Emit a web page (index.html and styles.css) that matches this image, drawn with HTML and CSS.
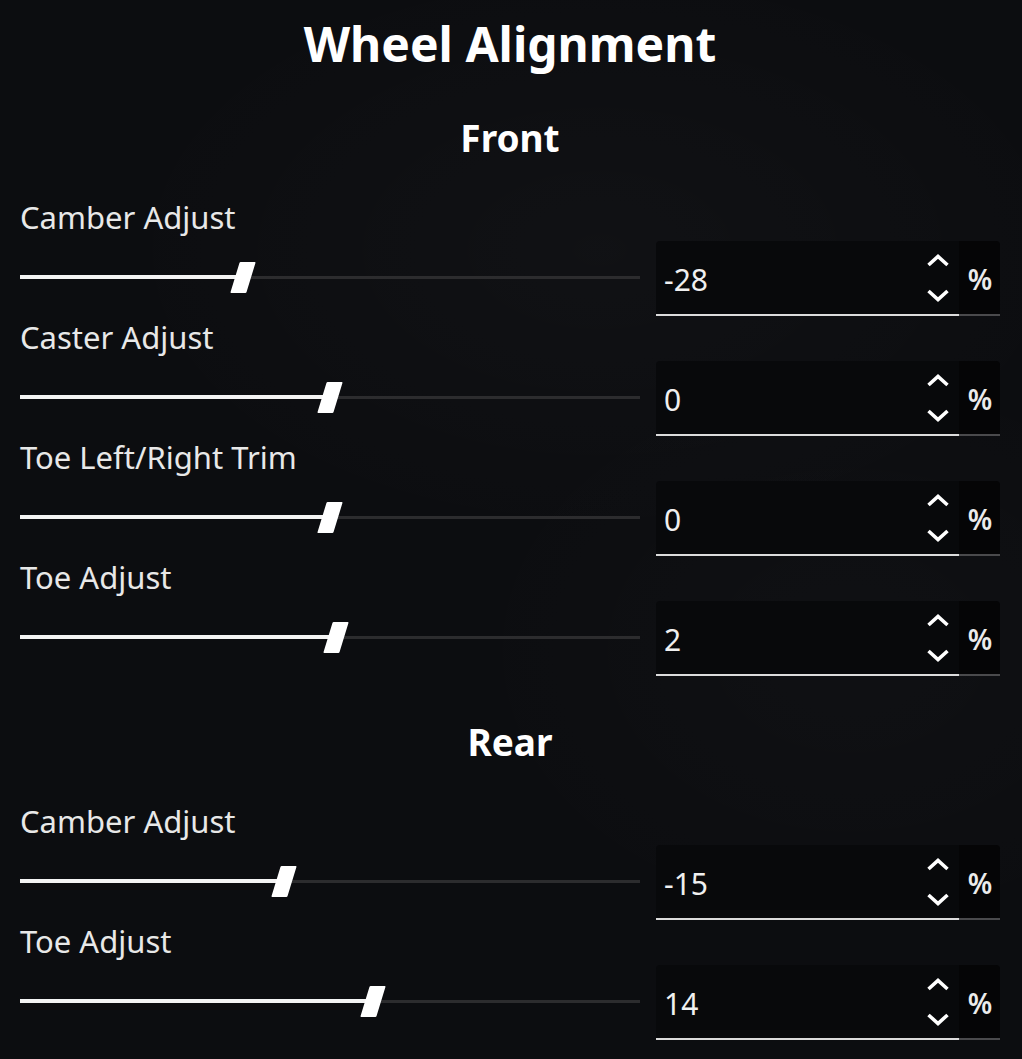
FILE: index.html
```html
<!DOCTYPE html>
<html lang="en">
<head>
<meta charset="utf-8">
<title>Wheel Alignment</title>
<link rel="stylesheet" href="styles.css">
</head>
<body>
<main class="panel">
  <h1 class="title">Wheel Alignment</h1>

  <section class="group">
    <h2 class="group-title">Front</h2>

    <div class="row">
      <div class="label">Camber Adjust</div>
      <div class="control">
        <div class="slider" style="--p:36%"><div class="fill"></div><div class="thumb"></div></div>
        <div class="field">
          <div class="field-main"><span class="value">-28</span>
            <span class="spin"><svg viewBox="0 0 24 13"><polyline points="2.5,11 12,2.5 21.5,11"/></svg><svg viewBox="0 0 24 13"><polyline points="2.5,2 12,10.5 21.5,2"/></svg></span>
          </div>
          <div class="suffix">%</div>
        </div>
      </div>
    </div>

    <div class="row">
      <div class="label">Caster Adjust</div>
      <div class="control">
        <div class="slider" style="--p:50%"><div class="fill"></div><div class="thumb"></div></div>
        <div class="field">
          <div class="field-main"><span class="value">0</span>
            <span class="spin"><svg viewBox="0 0 24 13"><polyline points="2.5,11 12,2.5 21.5,11"/></svg><svg viewBox="0 0 24 13"><polyline points="2.5,2 12,10.5 21.5,2"/></svg></span>
          </div>
          <div class="suffix">%</div>
        </div>
      </div>
    </div>

    <div class="row">
      <div class="label">Toe Left/Right Trim</div>
      <div class="control">
        <div class="slider" style="--p:50%"><div class="fill"></div><div class="thumb"></div></div>
        <div class="field">
          <div class="field-main"><span class="value">0</span>
            <span class="spin"><svg viewBox="0 0 24 13"><polyline points="2.5,11 12,2.5 21.5,11"/></svg><svg viewBox="0 0 24 13"><polyline points="2.5,2 12,10.5 21.5,2"/></svg></span>
          </div>
          <div class="suffix">%</div>
        </div>
      </div>
    </div>

    <div class="row">
      <div class="label">Toe Adjust</div>
      <div class="control">
        <div class="slider" style="--p:51%"><div class="fill"></div><div class="thumb"></div></div>
        <div class="field">
          <div class="field-main"><span class="value">2</span>
            <span class="spin"><svg viewBox="0 0 24 13"><polyline points="2.5,11 12,2.5 21.5,11"/></svg><svg viewBox="0 0 24 13"><polyline points="2.5,2 12,10.5 21.5,2"/></svg></span>
          </div>
          <div class="suffix">%</div>
        </div>
      </div>
    </div>
  </section>

  <section class="group group-rear">
    <h2 class="group-title">Rear</h2>

    <div class="row">
      <div class="label">Camber Adjust</div>
      <div class="control">
        <div class="slider" style="--p:42.5%"><div class="fill"></div><div class="thumb"></div></div>
        <div class="field">
          <div class="field-main"><span class="value">-15</span>
            <span class="spin"><svg viewBox="0 0 24 13"><polyline points="2.5,11 12,2.5 21.5,11"/></svg><svg viewBox="0 0 24 13"><polyline points="2.5,2 12,10.5 21.5,2"/></svg></span>
          </div>
          <div class="suffix">%</div>
        </div>
      </div>
    </div>

    <div class="row">
      <div class="label">Toe Adjust</div>
      <div class="control">
        <div class="slider" style="--p:57%"><div class="fill"></div><div class="thumb"></div></div>
        <div class="field">
          <div class="field-main"><span class="value">14</span>
            <span class="spin"><svg viewBox="0 0 24 13"><polyline points="2.5,11 12,2.5 21.5,11"/></svg><svg viewBox="0 0 24 13"><polyline points="2.5,2 12,10.5 21.5,2"/></svg></span>
          </div>
          <div class="suffix">%</div>
        </div>
      </div>
    </div>
  </section>
</main>
</body>
</html>
```

FILE: styles.css
```css
html, body {
  margin: 0;
  padding: 0;
}

body {
  background-color: #0c0d10;
  background-image:
    radial-gradient(ellipse 500px 300px at 600px 250px, rgba(255,255,255,0.018), transparent),
    radial-gradient(ellipse 400px 300px at 850px 650px, rgba(255,255,255,0.015), transparent);
  color: #f2f2f2;
  font-family: "Noto Sans", "Open Sans", sans-serif;
  min-height: 1059px;
  overflow: hidden;
}

.panel {
  padding: 14px 22px 0 20px;
}

.title {
  margin: 0;
  font-size: 48px;
  line-height: 60px;
  font-weight: 700;
  text-align: center;
  color: #ffffff;
}

.group {
  margin-top: 44px;
}

.group-rear {
  margin-top: 45px;
}

.group-title {
  margin: 0 0 39px;
  font-size: 37px;
  line-height: 40px;
  font-weight: 700;
  text-align: center;
  color: #ffffff;
}

.row {
  padding-bottom: 1px;
}

.label {
  font-size: 31px;
  line-height: 40px;
  color: #e8e8e8;
  white-space: nowrap;
}

.control {
  margin-top: 4px;
  height: 75px;
  display: flex;
  align-items: center;
  gap: 16px;
}

.slider {
  position: relative;
  flex: 0 0 620px;
  height: 3px;
  margin-top: -3px;
  background: #2c2c2e;
}

.fill {
  width: var(--p);
  height: 4px;
  margin-top: -0.5px;
  background: #f4f4f4;
}

.thumb {
  position: absolute;
  left: var(--p);
  top: 50%;
  width: 16px;
  height: 31px;
  margin-left: -8px;
  margin-top: -15px;
  background: #ffffff;
  border-radius: 1px;
  transform: skewX(-17deg);
}

.field {
  flex: 1 1 auto;
  height: 75px;
  display: flex;
  box-sizing: border-box;
}

.field-main {
  flex: 1 1 auto;
  display: flex;
  align-items: center;
  background: #08090b;
  border-bottom: 2px solid #dcdcdc;
  border-top-left-radius: 4px;
  padding-left: 8px;
  padding-right: 9px;
}

.value {
  flex: 1 1 auto;
  font-size: 30px;
  color: #f0f0f0;
  padding-top: 3px;
}

.spin {
  display: flex;
  flex-direction: column;
  gap: 22px;
  width: 24px;
  padding-top: 1px;
}

.spin svg {
  display: block;
  width: 24px;
  height: 13px;
  fill: none;
  stroke: #ffffff;
  stroke-width: 3.6;
  stroke-linejoin: miter;
}

.suffix {
  flex: 0 0 41px;
  display: flex;
  align-items: center;
  justify-content: center;
  background: #050506;
  border-bottom: 2px solid #4a4a4c;
  border-top-right-radius: 4px;
  font-size: 28px;
  font-weight: 600;
  color: #ececec;
  padding-top: 3px;
  box-sizing: border-box;
  letter-spacing: -1px;
}
```
